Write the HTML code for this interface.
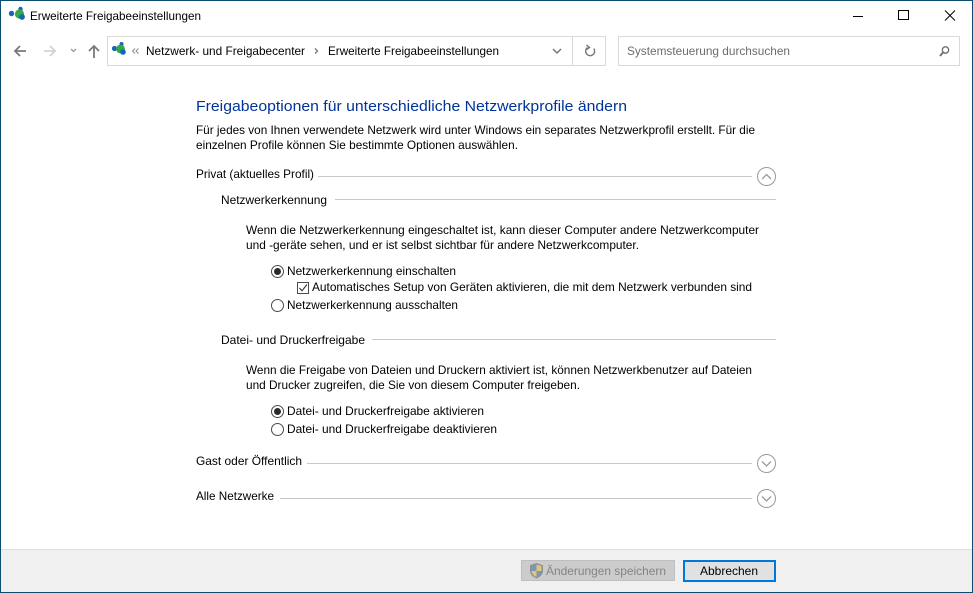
<!DOCTYPE html>
<html lang="de"><head><meta charset="utf-8"><title>Erweiterte Freigabeeinstellungen</title>
<style>
html,body{margin:0;padding:0;width:973px;height:593px;overflow:hidden;background:#fff}
svg{display:block}
text{font-family:"Liberation Sans",sans-serif;font-size:12px;fill:#000}
.g{fill:#6d6d6d}
</style></head><body>
<svg width="973" height="593" viewBox="0 0 973 593" xmlns="http://www.w3.org/2000/svg" shape-rendering="crispEdges">
<rect width="973" height="593" fill="#fff"/>
<!-- footer -->
<rect x="1" y="549" width="971" height="43" fill="#f0f0f0"/>
<rect x="1" y="549" width="971" height="1" fill="#dfdfdf"/>
<!-- window border -->
<rect x="0.5" y="0.5" width="972" height="592" fill="none" stroke="#0f4d6f"/>

<!-- title icon -->
<g shape-rendering="auto">
<circle cx="11.500" cy="13.500" r="2.700" fill="#1565b8"/><circle cx="20.500" cy="9" r="2.200" fill="#1565b8"/><circle cx="19.500" cy="14" r="4.600" fill="#35a84a"/><circle cx="22" cy="17" r="2.900" fill="#1565b8"/>
</g>
<text x="30" y="20" textLength="171" lengthAdjust="spacingAndGlyphs">Erweiterte Freigabeeinstellungen</text>

<!-- window controls -->
<rect x="853" y="16" width="10" height="1" fill="#000"/>
<rect x="898.500" y="10.500" width="10" height="9" fill="none" stroke="#000"/>
<path d="M945 10.500L955 20.500M955 10.500L945 20.500" stroke="#000" fill="none" shape-rendering="auto"/>

<!-- nav -->
<g fill="none" shape-rendering="auto" stroke-width="1.800">
<path d="M26 51H15M20 46L15 51L20 56" stroke="#7a7a7a"/>
<path d="M44 51H55M50 46L55 51L50 56" stroke="#d2d2d2"/>
<path d="M71 49L73.500 51.500L76 49" stroke="#9a9a9a" stroke-width="1.300"/>
<path d="M94 58V46M89 51L94 46L99 51" stroke="#7a7a7a"/>
</g>

<!-- address bar -->
<rect x="107.500" y="36.500" width="498" height="29" fill="#fff" stroke="#d9d9d9"/>
<rect x="572" y="37" width="1" height="28" fill="#d9d9d9"/>
<g shape-rendering="auto">
<circle cx="114.500" cy="48.500" r="2.600" fill="#1565b8"/><circle cx="121.500" cy="44" r="2" fill="#1565b8"/><circle cx="120.500" cy="49" r="4.400" fill="#35a84a"/><circle cx="123" cy="52" r="2.800" fill="#1565b8"/>
</g>
<path d="M135 48.500L132.500 51L135 53.500M138.500 48.500L136 51L138.500 53.500" fill="none" stroke="#8a8a8a" shape-rendering="auto"/>
<text x="146" y="55" textLength="159" lengthAdjust="spacingAndGlyphs">Netzwerk- und Freigabecenter</text>
<path d="M315 48.500L317.500 51L315 53.500" fill="none" stroke="#777" stroke-width="1.300" shape-rendering="auto"/>
<text x="328" y="55" textLength="171" lengthAdjust="spacingAndGlyphs">Erweiterte Freigabeeinstellungen</text>
<path d="M553 49L557 53L561 49" fill="none" stroke="#777" stroke-width="1.500" shape-rendering="auto"/>
<g fill="none" stroke="#777" stroke-width="1.400" shape-rendering="auto"><path d="M587.500 47.500A4.500 4.500 0 1 0 593.800 48.500"/><path d="M586.500 45L589.500 47.500L586.500 49.500"/></g>

<!-- search -->
<rect x="618.500" y="36.500" width="341" height="29" fill="#fff" stroke="#d9d9d9"/>
<text x="627" y="55" textLength="163" lengthAdjust="spacingAndGlyphs" class="g">Systemsteuerung durchsuchen</text>
<g fill="none" stroke="#6d6d6d" shape-rendering="auto"><circle cx="945.500" cy="50" r="3.200" stroke-width="1.300"/><path d="M943 52.500L940 56" stroke-width="1.800"/></g>

<!-- content -->
<text x="196" y="111" textLength="431" lengthAdjust="spacingAndGlyphs" style="font-size:15px;fill:#003399">Freigabeoptionen für unterschiedliche Netzwerkprofile ändern</text>
<text x="196" y="134" textLength="559" lengthAdjust="spacingAndGlyphs">Für jedes von Ihnen verwendete Netzwerk wird unter Windows ein separates Netzwerkprofil erstellt. Für die</text>
<text x="196" y="149" textLength="322" lengthAdjust="spacingAndGlyphs">einzelnen Profile können Sie bestimmte Optionen auswählen.</text>

<text x="196" y="178" textLength="118" lengthAdjust="spacingAndGlyphs">Privat (aktuelles Profil)</text>
<rect x="318" y="176" width="434" height="1" fill="#c8c8c8"/>
<text x="221" y="204" textLength="106" lengthAdjust="spacingAndGlyphs">Netzwerkerkennung</text>
<rect x="335" y="199" width="441" height="1" fill="#c8c8c8"/>
<text x="246" y="234" textLength="513" lengthAdjust="spacingAndGlyphs">Wenn die Netzwerkerkennung eingeschaltet ist, kann dieser Computer andere Netzwerkcomputer</text>
<text x="246" y="249" textLength="393" lengthAdjust="spacingAndGlyphs">und -geräte sehen, und er ist selbst sichtbar für andere Netzwerkcomputer.</text>

<g fill="#fff" stroke="#4a4a4a" shape-rendering="auto">
<circle cx="277.500" cy="271.500" r="6"/><circle cx="277.500" cy="305.500" r="6"/>
<circle cx="277.500" cy="411.500" r="6"/><circle cx="277.500" cy="429.500" r="6"/>
</g>
<g fill="#2a2a2a" shape-rendering="auto"><circle cx="277.500" cy="271.500" r="3.500"/><circle cx="277.500" cy="411.500" r="3.500"/></g>
<text x="287" y="275" textLength="169" lengthAdjust="spacingAndGlyphs">Netzwerkerkennung einschalten</text>
<rect x="297.500" y="282.500" width="11" height="11" fill="#fff" stroke="#4a4a4a"/>
<path d="M299.500 288L302 290.800L307 284.500" fill="none" stroke="#333" stroke-width="1.100" shape-rendering="auto"/>
<text x="312" y="291" textLength="440" lengthAdjust="spacingAndGlyphs">Automatisches Setup von Geräten aktivieren, die mit dem Netzwerk verbunden sind</text>
<text x="287" y="309" textLength="171" lengthAdjust="spacingAndGlyphs">Netzwerkerkennung ausschalten</text>

<text x="221" y="344" textLength="144" lengthAdjust="spacingAndGlyphs">Datei- und Druckerfreigabe</text>
<rect x="372" y="339" width="404" height="1" fill="#c8c8c8"/>
<text x="246" y="374" textLength="506" lengthAdjust="spacingAndGlyphs">Wenn die Freigabe von Dateien und Druckern aktiviert ist, können Netzwerkbenutzer auf Dateien</text>
<text x="246" y="389" textLength="334" lengthAdjust="spacingAndGlyphs">und Drucker zugreifen, die Sie von diesem Computer freigeben.</text>
<text x="287" y="415" textLength="197" lengthAdjust="spacingAndGlyphs">Datei- und Druckerfreigabe aktivieren</text>
<text x="287" y="433" textLength="210" lengthAdjust="spacingAndGlyphs">Datei- und Druckerfreigabe deaktivieren</text>

<text x="196" y="465" textLength="106" lengthAdjust="spacingAndGlyphs">Gast oder Öffentlich</text>
<rect x="307" y="463" width="445" height="1" fill="#c8c8c8"/>
<text x="196" y="500" textLength="78" lengthAdjust="spacingAndGlyphs">Alle Netzwerke</text>
<rect x="280" y="498" width="472" height="1" fill="#c8c8c8"/>

<!-- expanders -->
<g fill="#fff" stroke="#9a9a9a" shape-rendering="auto">
<circle cx="766.500" cy="176.500" r="9"/><circle cx="766.500" cy="463.500" r="9"/><circle cx="766.500" cy="498.500" r="9"/>
<path d="M762 179L766.500 174.500L771 179" fill="none" stroke-width="1.300"/>
<path d="M762 461.500L766.500 466L771 461.500" fill="none" stroke-width="1.300"/>
<path d="M762 496.500L766.500 501L771 496.500" fill="none" stroke-width="1.300"/>
</g>

<!-- buttons -->
<rect x="521.500" y="560.500" width="153" height="20" fill="#cccccc" stroke="#bfbfbf"/>
<g shape-rendering="auto">
<path d="M536.500 563L543 565.200V570.500C543 574.500 540 577 536.500 578.500C533 577 530 574.500 530 570.500V565.200Z" fill="#8b8f96"/>
<path d="M536.500 564.500V571H531.500V566Z" fill="#7b97bb"/><path d="M536.500 564.500L541.500 566V571H536.500Z" fill="#e3c57a"/>
<path d="M531.500 571H536.500V577C534 576 531.800 574 531.500 571Z" fill="#e3c57a"/><path d="M536.500 571H541.500C541.200 574 539 576 536.500 577Z" fill="#7b97bb"/>
</g>
<text x="546" y="575" textLength="120" lengthAdjust="spacingAndGlyphs" style="fill:#838383">Änderungen speichern</text>
<rect x="684" y="561" width="91" height="20" fill="#e1e1e1" stroke="#0078d7" stroke-width="2"/>
<text x="700" y="575" textLength="58" lengthAdjust="spacingAndGlyphs">Abbrechen</text>
</svg>
</body></html>
